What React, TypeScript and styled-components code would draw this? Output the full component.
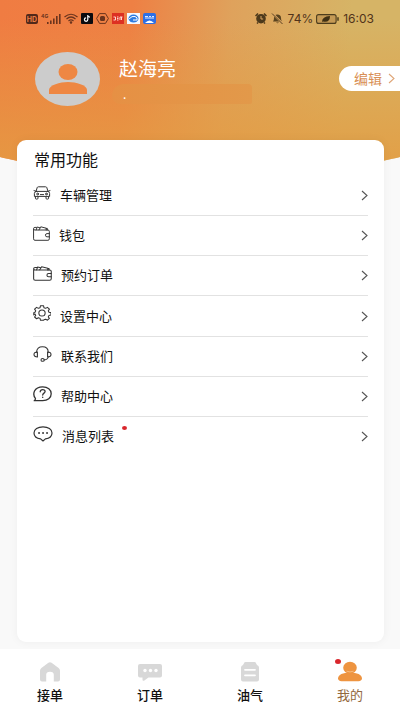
import React from 'react';
import styled, { createGlobalStyle } from 'styled-components';

const GlobalStyle = createGlobalStyle`
  * { box-sizing: border-box; }
  body {
    margin: 0;
    background: #f9f9f9;
    color: #111;
    font-family: "Noto Sans CJK SC", sans-serif;
  }
  button { font: inherit; color: inherit; border: 0; background: none; padding: 0; cursor: pointer; }
  svg { display: block; flex: none; }
`;

const Page = styled.div`
  min-height: 100vh;
  display: flex;
  flex-direction: column;
`;

const Header = styled.header`
  height: 180px;
  background:
    linear-gradient(180deg, rgba(228, 156, 66, 0) 10%, rgba(228, 156, 66, 0.85) 90%),
    linear-gradient(95deg, #f07c42 0%, #ee8044 32%, #dfa25c 56%, #d6b466 85%);
  clip-path: ellipse(102% 180px at 50% 0);
`;

const StatusBar = styled.div`
  display: flex;
  justify-content: space-between;
  align-items: center;
  height: 37px;
  padding: 0 26px;
  color: #51331a;
`;

const StatusGroup = styled.div`
  display: flex;
  align-items: center;
  gap: 3px;
`;

const StatusText = styled.span`
  font: 400 12px/16px Inter, sans-serif;
`;

const Profile = styled.section`
  display: flex;
  align-items: flex-start;
  padding: 15px 0 0 35px;
`;

const Avatar = styled.div`
  flex: none;
  width: 65px;
  height: 54px;
  border-radius: 50%;
  background: #ccc;
  display: flex;
  align-items: center;
  justify-content: center;
`;

const Identity = styled.div`
  flex: 1;
  min-width: 0;
  padding: 2px 0 0 12px;
`;

const Name = styled.h1`
  margin: 0 0 2px 7px;
  font-size: 19px;
  line-height: 28px;
  font-weight: 400;
  color: #fff;
`;

const HiddenPhone = styled.div`
  display: flex;
  align-items: flex-end;
  width: 140px;
  height: 20px;
  padding: 0 0 4px 11px;
  border-radius: 12px 4px 2px 8px;
  background: linear-gradient(90deg, #e69044, #e2994a);
  color: #fff;
  font-size: 12px;
  line-height: 12px;
`;

const EditButton = styled.button`
  display: flex;
  align-items: center;
  justify-content: space-between;
  width: 61px;
  height: 25px;
  margin-top: 14px;
  padding: 0 5px 0 15px;
  border-radius: 13px 0 0 13px;
  && { background: #fff; color: #d98f55; font-size: 14px; line-height: 20px; }
`;

const EditLabel = styled.span`
  padding-bottom: 2px;
`;

const Card = styled.main`
  position: relative;
  flex: 1;
  margin: -40px 16px 7px 17px;
  padding: 7px 16px 16px 16px;
  border-radius: 9px;
  background: #fff;
  box-shadow: 0 0 10px rgba(0, 0, 0, 0.05);
`;

const CardTitle = styled.h2`
  margin: 0 0 5px 1px;
  font-size: 16px;
  line-height: 24px;
  font-weight: 400;
`;

const Menu = styled.ul`
  margin: 0;
  padding: 0;
  list-style: none;
`;

const MenuItem = styled.li`
  border-bottom: 1px solid #e2e2e2;
  &:last-child { border-bottom: 0; }
`;

const MenuButton = styled.button`
  display: flex;
  align-items: center;
  width: 100%;
  height: 39px;
  text-align: left;
  && { font-size: 13px; line-height: 20px; }
  ${MenuItem}:nth-child(4n) & { height: 40px; }
`;

const MenuIcon = styled.span<{ $low?: boolean }>`
  margin-right: 9px;
  padding-bottom: ${(p) => (p.$low ? 4 : 6)}px;
`;

const MenuLabel = styled.span`
  display: flex;
  flex: 1;
  gap: 8px;
  padding-bottom: 1px;
`;

const Dot = styled.span`
  width: 5px;
  height: 4px;
  border-radius: 50%;
  background: #d9262c;
`;

const NavBar = styled.nav`
  display: grid;
  grid-template-columns: repeat(4, 1fr);
  height: 62px;
  background: #fff;
`;

const NavButton = styled.button<{ $active?: boolean }>`
  position: relative;
  display: flex;
  flex-direction: column;
  align-items: center;
  gap: 2px;
  && {
    padding-top: 12px;
    color: ${(p) => (p.$active ? '#93683c' : '#111')};
    font-size: 13px;
    line-height: 20px;
    font-weight: ${(p) => (p.$active ? 400 : 500)};
  }
`;

const NavBadge = styled(Dot)`
  position: absolute;
  top: 10px;
  left: calc(50% - 15px);
  width: 6px;
  height: 5px;
`;

const Chevron = ({ color = '#555' }: { color?: string }) => (
  <svg width="7" height="11" viewBox="0 0 7 11" fill="none" stroke={color} strokeWidth="1.1">
    <path d="M1 1 6 5.5 1 10" />
  </svg>
);

const line = { fill: 'none', stroke: '#333', strokeWidth: 1.1, strokeLinecap: 'round', strokeLinejoin: 'round' } as const;

const CarIcon = () => (
  <svg width="18" height="14" viewBox="0 0 18 14" {...line} strokeWidth="1">
    <path d="M3 5.400 4.200 1.600Q4.400.8 5.400.8h7.200q1 0 1.200.8L15 5.400M3 5.400h12q1.600.5 1.600 2v3H1.400v-3q0-1.500 1.600-2ZM1 4.600 3 5.300M17 4.600l-2 .7" />
    <path d="M2.400 10.600v1.600q0 .9 1 .9h.6q1 0 1-.9v-1.600M13 10.600v1.600q0 .9 1 .9h.6q1 0 1-.9v-1.600" />
    <circle cx="4.600" cy="8" r=".9" /><circle cx="13.400" cy="8" r=".9" />
    <path d="M7.400 8.600h3.200" />
  </svg>
);

const WalletIcon = ({ width }: { width: number }) => (
  <svg width={width} height="15" viewBox="0 0 18 15" preserveAspectRatio="none" {...line} strokeWidth="1">
    <path d="M.6 3.200v9.600q0 1.500 1.500 1.500h13.700q1.500 0 1.500-1.500V5.400q0-1.400-1.500-1.400H2Q.6 4 .6 2.700 .6 1.400 2 1.400h1.600" />
    <path d="M3.400 3.800 4.400 1l3 .8M6.400 3.800 8.200.8l5.800 1.400V4M15.200 4V2.400h-1.200" />
    <path d="M17.200 7.600h-2.400a1.600 1.600 0 0 0 0 3.200h2.400" />
  </svg>
);

const GearIcon = () => (
  <svg width="18" height="16" viewBox="0 0 24 22" preserveAspectRatio="none" {...line} strokeWidth="1.4">
    <path d="M10 1h4l.6 2.700 2.200.9 2.400-1.400 2.700 2.500-1.500 2.200.9 2 2.700.6v3.200l-2.700.6-.9 2 1.500 2.200-2.700 2.400-2.400-1.400-2.200.9L14 21h-4l-.6-2.600-2.200-.9-2.400 1.400-2.700-2.400 1.500-2.200-.9-2L1 13.700v-3.200l1.700-.6.9-2-1.500-2.200 2.700-2.500 2.400 1.400 2.200-.9Z" />
    <circle cx="12" cy="11" r="4.200" />
  </svg>
);

const HeadsetIcon = () => (
  <svg width="19" height="16" viewBox="0 0 19 16" {...line}>
    <path d="M3.600 6.200C3.600 2.600 6 .8 9.400.8s5.800 1.800 5.800 5.400" />
    <path d="M4.400 6v5C2.200 11 1 10 1 8.500S2.200 6 4.400 6ZM14.600 6v5c2.200 0 3.400-1 3.400-2.500S16.800 6 14.600 6Z" />
    <path d="M15.200 11q-.4 2.600-4 2.900" />
    <ellipse cx="9.600" cy="13.900" rx="1.600" ry="1.400" />
  </svg>
);

const HelpIcon = () => (
  <svg width="19" height="16" viewBox="0 0 19 16" {...line} strokeWidth="1.3">
    <path d="M2.400 12.300C-.8 8.400.8.8 9.700.8c5 0 8.500 2.800 8.500 6.900s-3.500 7-8.500 7H1.200q1.500-1 1.200-2.400Z" />
    <path d="M7.200 5.800C7.200 4.300 8.200 3.600 9.600 3.600s2.500.7 2.500 1.900c0 1.600-2.400 1.700-2.400 3.600M9.700 11.200v.2" />
  </svg>
);

const MessageIcon = () => (
  <svg width="20" height="16" viewBox="0 0 20 16" {...line} strokeWidth="1.2">
    <path d="M10 .8c5.200 0 9 2.500 9 6.100 0 3.200-2.700 5.400-6.600 6L10 15l-2.400-2.100C3.700 12.300 1 10.100 1 6.900 1 3.300 4.800.8 10 .8Z" />
    <path d="M6 7h.1M10 7h.1M14 7h.1" strokeWidth="1.8" />
  </svg>
);

const HomeIcon = () => (
  <svg width="22" height="22" viewBox="0 0 22 22">
    <path fill="#d8d8d8" d="M9.400 1.800q1.600-1.100 3.200 0l7 5.300Q21 8.200 21 9.800v8.700q0 2-2 2h-4.200v-6.800q0-3-3.800-3t-3.800 3v6.800H3q-2 0-2-2V9.800q0-1.600 1.400-2.700Z" />
  </svg>
);

const ChatIcon = () => (
  <svg width="24" height="22" viewBox="0 0 24 22">
    <path fill="#d8d8d8" d="M2 3h20q2 0 2 2v9.500q0 2-2 2H10.500L6 19.700q-1.500.6-1.500-1v-2.200H2q-2 0-2-2V5q0-2 2-2Z" />
    <g fill="#fff"><circle cx="7" cy="9.500" r="1.700" /><circle cx="12.500" cy="9.500" r="1.700" /><circle cx="18" cy="9.500" r="1.700" /></g>
  </svg>
);

const FuelIcon = () => (
  <svg width="20" height="22" viewBox="0 0 20 22">
    <path fill="#d8d8d8" d="M5.500 1h9q1.200 0 1.500 1.300L17 4q2 .6 2 2.600v11.900q0 2-2 2H3q-2 0-2-2V6.600Q1 4.600 3 4l1-1.700Q4.300 1 5.500 1Z" />
    <path stroke="#fff" strokeWidth="1.8" strokeLinecap="round" d="M5 8.800h10M5 14.300h10" />
  </svg>
);

const MineIcon = () => (
  <svg width="24" height="22" viewBox="0 0 24 22" fill="#ee9440">
    <path d="M0 17.600C0 13.500 5 11.800 12 11.800s12 1.700 12 5.800c0 1.500-1.300 2.600-3.500 2.600h-17C1.300 20.200 0 19.100 0 17.600Z" />
    <ellipse cx="12" cy="6.700" rx="6.800" ry="6" />
    <path d="M8.500 10.200q3.500 1.500 7 0" fill="none" stroke="#f8c58f" strokeWidth=".8" />
  </svg>
);

const SystemIcons = () => (
  <StatusGroup aria-hidden="true">
    <svg width="12" height="10" viewBox="0 0 12 10">
      <rect width="12" height="10" rx="2" fill="#51281a" />
      <text x="6" y="7.600" textAnchor="middle" fontFamily="Inter" fontWeight="700" fontSize="7" fill="#e97c43">HD</text>
    </svg>
    <svg width="20" height="12" viewBox="0 0 20 12" fill="#6b341d">
      <text x="0" y="5" fontFamily="Inter" fontWeight="700" fontSize="5">4G</text>
      <path d="M6 9h1.600v2H6zM9 7.500h1.600V11H9zM12 5.500h1.600V11H12zM15 3h1.600v8H15zM18 1h1.600v10H18z" />
    </svg>
    <svg width="14" height="11" viewBox="0 0 14 11" fill="none" stroke="#6b341d" strokeWidth="1.2">
      <path d="M.5 4Q7-1.500 13.500 4M2.500 6Q7 2 11.500 6M4.500 8Q7 5.800 9.500 8" />
      <circle cx="7" cy="9.500" r=".7" fill="#6b341d" />
    </svg>
    <svg width="12" height="11" viewBox="0 0 12 11">
      <rect width="12" height="11" rx="1" fill="#0b0b0f" />
      <path d="M6.800 2v4.600a1.700 1.700 0 1 1-1.700-1.700M6.800 2q.3 2 2.200 2.100" fill="none" stroke="#fff" strokeWidth="1.2" />
    </svg>
    <svg width="13" height="11" viewBox="0 0 13 11">
      <path d="M3.500.6h6l2.900 4.900-2.900 4.900h-6L.6 5.500Z" fill="none" stroke="#6b341d" />
      <rect x="4" y="3" width="5" height="5" rx="1.5" fill="#6b341d" />
    </svg>
    <svg width="12" height="11" viewBox="0 0 12 11">
      <rect width="12" height="11" fill="#dd3022" />
      <path d="M1.500 4h2v3h-2M5 4h1.500M5 5.500h1.500M5 7h1.500M8 7V4h2.500M9.500 4v3" fill="none" stroke="#ffd9cf" />
    </svg>
    <svg width="13" height="11" viewBox="0 0 13 11">
      <rect width="13" height="11" fill="#f4f8ff" />
      <ellipse cx="6.500" cy="5.500" rx="5" ry="4" fill="#2e7be0" />
      <path d="M2 6q3-3.500 6-2.500T10 7M6 7h4" fill="none" stroke="#fff" />
    </svg>
    <svg width="13" height="11" viewBox="0 0 13 11">
      <rect width="13" height="11" rx="2" fill="#2d6fe6" />
      <path d="M2 3.500h3M6 3.500h2M9 3.500h2M2 5h9" stroke="#dbe9ff" />
      <path d="M2 10q4.500-5 9 0Z" fill="#fff" />
    </svg>
  </StatusGroup>
);

const SystemState = () => (
  <StatusGroup>
    <svg width="12" height="11" viewBox="0 0 12 11">
      <path d="M.5 3 3 .5M11.500 3 9 .5M2 10.500l1-1M10 10.500l-1-1" stroke="#4d391b" strokeWidth="1.5" />
      <circle cx="6" cy="5.700" r="4.800" fill="#4d391b" />
      <path d="M6 3v3h2.200" fill="none" stroke="#dca764" />
    </svg>
    <svg width="15" height="11" viewBox="0 0 15 11">
      <path d="M3 8.500q1-1 1-3.500 0-3 3.300-3.400Q11 2 11 5q0 2.500 1 3.500ZM6 9.500h3q-1.500 1.500-3 0Z" fill="#5a431f" />
      <path d="M2.500.5 12.500 10.500" stroke="#dca764" strokeWidth="2" /><path d="M2 .5 12.500 11" stroke="#5a431f" />
    </svg>
    <StatusText>74%</StatusText>
    <svg width="24" height="10" viewBox="0 0 24 10">
      <rect x=".6" y=".6" width="19.5" height="8.800" rx="2" fill="#c59a55" stroke="#4d3d1d" strokeWidth="1.1" />
      <path d="M6 8q0-5.500 8-6 0 7-7 5.500Z" fill="#3f3014" /><path d="M22 3.200v3.600" stroke="#4d3d1d" strokeWidth="1.5" />
    </svg>
    <StatusText>16:03</StatusText>
  </StatusGroup>
);

const menuItems = [
  { label: '车辆管理', icon: <CarIcon /> },
  { label: '钱包', icon: <WalletIcon width={17} />, low: true },
  { label: '预约订单', icon: <WalletIcon width={19} />, low: true },
  { label: '设置中心', icon: <GearIcon /> },
  { label: '联系我们', icon: <HeadsetIcon /> },
  { label: '帮助中心', icon: <HelpIcon /> },
  { label: '消息列表', icon: <MessageIcon />, unread: true },
];

const navItems = [
  { label: '接单', icon: <HomeIcon /> },
  { label: '订单', icon: <ChatIcon /> },
  { label: '油气', icon: <FuelIcon /> },
  { label: '我的', icon: <MineIcon />, active: true },
];

export default function App() {
  return (
    <Page>
      <GlobalStyle />
      <Header>
        <StatusBar>
          <SystemIcons />
          <SystemState />
        </StatusBar>
        <Profile>
          <Avatar>
            <svg width="38" height="32" viewBox="0 0 38 32" fill="#ee8743">
              <ellipse cx="19" cy="9" rx="9.5" ry="8" />
              <path d="M0 31v-4c0-5 11-8 19-8s19 3 19 8v4Z" />
            </svg>
          </Avatar>
          <Identity>
            <Name>赵海亮</Name>
            <HiddenPhone>.</HiddenPhone>
          </Identity>
          <EditButton type="button">
            <EditLabel>编辑</EditLabel>
            <Chevron color="#dfa577" />
          </EditButton>
        </Profile>
      </Header>
      <Card>
        <CardTitle>常用功能</CardTitle>
        <Menu>
          {menuItems.map((item) => (
            <MenuItem key={item.label}>
              <MenuButton type="button">
                <MenuIcon $low={item.low}>{item.icon}</MenuIcon>
                <MenuLabel>
                  {item.label}
                  {item.unread && <Dot />}
                </MenuLabel>
                <Chevron />
              </MenuButton>
            </MenuItem>
          ))}
        </Menu>
      </Card>
      <NavBar>
        {navItems.map((item) => (
          <NavButton key={item.label} type="button" $active={item.active} aria-current={item.active ? 'page' : undefined}>
            {item.icon}
            {item.label}
            {item.active && <NavBadge />}
          </NavButton>
        ))}
      </NavBar>
    </Page>
  );
}
